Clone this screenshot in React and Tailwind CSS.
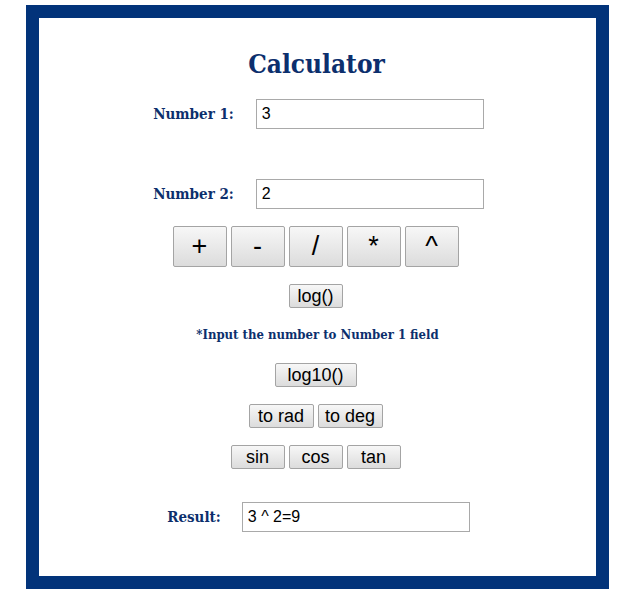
import React from "react";

const serif = "font-['DejaVu_Serif_Condensed','DejaVu_Serif',serif] font-bold text-[#0c2f6d]";
const btn =
  "border border-[#a4a4a4] rounded-[2px] bg-gradient-to-b from-[#f7f7f7] to-[#dcdcdc] text-black font-['Liberation_Sans',Arial,sans-serif] leading-none flex items-center justify-center";

function Field({ label, value, gap }) {
  return (
    <div className="flex items-center justify-center" style={{ gap }}>
      <span className={`${serif} text-[15px]`}>{label}</span>
      <input
        readOnly
        value={value}
        className="w-[228px] h-[30px] border border-[#a9a9a9] px-[5px] text-[16px] text-black font-['Liberation_Sans',Arial,sans-serif] outline-none"
      />
    </div>
  );
}

function Btn({ children, w, h = "h-[24px]", text = "text-[18px]" }) {
  return <button className={`${btn} ${w} ${h} ${text}`}>{children}</button>;
}

export default function App() {
  return (
    <div className="pt-[5px] pl-[26px] bg-white min-h-screen">
      <div className="w-[583px] h-[584px] border-[13px] border-[#02337a] bg-white flex flex-col items-center">
        <h1 className={`${serif} text-[26px] leading-[32px] mt-[30px] mr-[2px]`}>Calculator</h1>
        <div className="mt-[19px] ml-[2px]">
          <Field label="Number 1:" value="3" gap="22px" />
        </div>
        <div className="mt-[50px] ml-[2px]">
          <Field label="Number 2:" value="2" gap="22px" />
        </div>
        <div className="flex gap-[4px] mt-[17px] mr-[4px]">
          {["+", "-", "/", "*", "^"].map((op) => (
            <Btn key={op} w="w-[54px]" h="h-[41px]" text="text-[27px]">
              {op}
            </Btn>
          ))}
        </div>
        <div className="mt-[17px] mr-[4px]">
          <Btn w="w-[54px]">log()</Btn>
        </div>
        <p className={`${serif} text-[13px] leading-[16px] mt-[19px]`}>*Input the number to Number 1 field</p>
        <div className="mt-[20px] mr-[4px]">
          <Btn w="w-[82px]">log10()</Btn>
        </div>
        <div className="flex gap-[4px] mt-[17px] mr-[4px]">
          <Btn w="w-[65px]">to rad</Btn>
          <Btn w="w-[65px]">to deg</Btn>
        </div>
        <div className="flex gap-[4px] mt-[17px] mr-[4px]">
          <Btn w="w-[54px]">sin</Btn>
          <Btn w="w-[54px]">cos</Btn>
          <Btn w="w-[54px]">tan</Btn>
        </div>
        <div className="mt-[33px] ml-[2px]">
          <Field label="Result:" value="3 ^ 2=9" gap="21px" />
        </div>
      </div>
    </div>
  );
}
